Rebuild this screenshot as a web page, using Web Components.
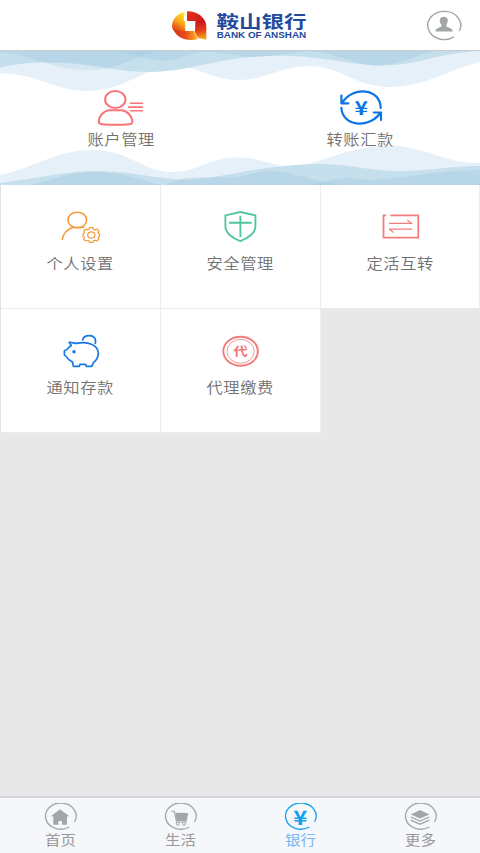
<!DOCTYPE html>
<html lang="zh-CN">
<head>
<meta charset="UTF-8">
<meta name="viewport" content="width=device-width, initial-scale=1">
<title>鞍山银行</title>
<style>
  html, body {
    margin: 0;
    height: 100%;
  }
  body {
    font-family: "Noto Sans CJK SC", "Noto Sans", sans-serif;
    background: #e8e8e8;
    overflow: hidden;
  }
</style>
</head>
<body>
<bank-app></bank-app>

<script>
// line icons, drawn on the canvas given by their viewBox
const ICONS = {
  account: `<svg viewBox="0 0 60 40" width="60" height="40" fill="none" stroke="#f87478" stroke-width="2" stroke-linecap="round">
    <ellipse cx="25.3" cy="11.5" rx="10.2" ry="8.6"/>
    <path d="M12 36.2Q8.800 36 8.800 33.500C9 27 15 22.500 19 22.300H31.500C37 22.700 42 28 42.500 33.500Q42.300 36 39.500 36.200C33 36.700 18 36.700 12 36.200Z"/>
    <path d="M40.500 15.300H52.500M38.500 19.100H52.500M40.500 22.800H52.500" stroke-width="1.600"/></svg>`,
  remit: `<svg viewBox="0 0 60 40" width="60" height="40" fill="none" stroke="#0c74e8" stroke-width="2.200" stroke-linecap="round" stroke-linejoin="round">
    <path d="M12.500 14.500C23 -2 50.500 0 50.700 20M11.400 7.500V15.300H18.300M11.400 19.800C12 37.500 38 42 50.300 25M43.800 24.500H51V32"/>
    <text x="31.300" y="27.300" font-family="Noto Sans CJK SC" font-size="19" font-weight="700" fill="#0c74e8" stroke="none" text-anchor="middle" textLength="13.500" lengthAdjust="spacingAndGlyphs">¥</text></svg>`,
  settings: `<svg viewBox="0 0 60 36" width="60" height="36" fill="none" stroke="#f59a3c" stroke-width="1.600" stroke-linecap="round">
    <ellipse cx="27.300" cy="11" rx="9.300" ry="7.800"/>
    <path d="M12.300 30.300C13.300 24.500 17 20.500 22.700 18.500H33.500"/>
    <ellipse cx="41.300" cy="26" rx="3.600" ry="3.200" stroke-width="1.200"/>
    <path stroke-width="1.200" stroke-linejoin="round" d="M39.500 18.700H43L43.600 20.400L45 20.900L46.900 20L49 21.900L48.100 23.500L48.600 24.400L49.600 24.700V27.400L48.500 27.900L48 28.900L48.800 30.300L46.700 32L45 31.300L43.500 31.900L43 33.300H39.600L39 31.900L37.500 31.300L35.700 32L33.600 30.200L34.400 28.700L34 27.800L33 27.400V24.700L34.100 24.300L34.500 23.300L33.700 21.800L35.700 20.100L37.500 20.900L39 20.300Z"/></svg>`,
  shield: `<svg viewBox="0 0 60 36" width="60" height="36" fill="none" stroke="#52c69c" stroke-width="1.900">
    <path d="M30.300 3L45.400 6.400V17.500C45.400 24 37.500 29.500 30.300 32.200C23 29.500 15.400 24 15.400 17.500V6.400Z"/>
    <path d="M30.400 6.800V28M19 13.800H41.700"/></svg>`,
  exchange: `<svg viewBox="0 0 60 36" width="60" height="36" fill="none" stroke="#f87c7c" stroke-width="1.800" stroke-linejoin="round">
    <path d="M16 6.400H13.500V28.700H48.300V6.400H20.300"/>
    <path stroke-width="1.200" d="M19 14.400H41.800L37.300 11M42.300 20.200H19.500L23.500 23.500"/></svg>`,
  pig: `<svg viewBox="0 0 60 36" width="60" height="36" fill="none" stroke="#1478e4" stroke-width="1.700" stroke-linejoin="round">
    <path d="M19.200 9.300C22 9 24 10.500 26.200 10.400C32 9.200 37.500 9.300 41.500 11.200C46 13 48.300 16.500 48.300 20.500C48.200 25 45.300 28.200 43.500 29.700L41.800 33.300H36.300L35.600 31.300H30L29.300 33.300H23.400L22.500 29L18.500 26.400C17.300 24.500 16 22.700 14.400 22V17.800C16.500 17.500 18 15.800 19.200 14.100L21.300 12.500Z"/>
    <path d="M32.500 7.500C34 1 44.500 1.200 45.500 7.500Q45.600 9 45.200 11"/>
    <circle cx="24" cy="18.700" r="1.700" fill="#1478e4" stroke="none"/></svg>`,
  agent: `<svg viewBox="0 0 60 36" width="60" height="36" fill="none" stroke="#f27c7c">
    <ellipse cx="30.600" cy="18.300" rx="17.300" ry="14.500" stroke-width="1.900"/>
    <ellipse cx="30.600" cy="18.300" rx="13.600" ry="11.900" stroke-width=".8"/>
    <text x="30.600" y="23" font-family="Noto Sans CJK SC" font-size="12.500" font-weight="700" fill="#f27474" stroke="none" text-anchor="middle" textLength="14.500" lengthAdjust="spacingAndGlyphs">代</text></svg>`
};

const RING = `<path d="M35.600 18.800A15.300 13.100 0 1 0 30.300 24" fill="none" stroke="currentColor" stroke-width="1.300"/>`;

const TAB_ICONS = {
  home: `<path d="M21 6.200L30.300 13.300H28V21.800H23V18H19.500V21.800H14.300V13.300H11.800Z"/>`,
  cart: `<path d="M16.200 9.700L29.200 9.900L27.700 18H17.600Z"/>
    <path d="M12.300 8.300H15.300L17.500 19H28" fill="none" stroke="currentColor" stroke-width="1.100"/>
    <g fill="none" stroke="currentColor"><circle cx="18.800" cy="20.800" r="1.500"/><circle cx="25" cy="20.800" r="1.500"/></g>`,
  yen: `<text x="21.200" y="21.500" font-family="Noto Sans CJK SC" font-size="20" font-weight="700" text-anchor="middle" textLength="14" lengthAdjust="spacingAndGlyphs">¥</text>`,
  layers: `<path d="M21 7L30.500 11.400L21 15.500L11.800 11.400Z"/>
    <path d="M11.800 14L21 18L30.300 14M11.800 17.200L21 21.200L30.300 17.200" fill="none" stroke="currentColor" stroke-width="1.300"/>`
};

class AppHeader extends HTMLElement {
  connectedCallback() {
    this.attachShadow({ mode: "open" });
    this.shadowRoot.innerHTML = `
      <style>
        :host {
          display: grid;
          grid-template-columns: 1fr 160px 1fr;
          align-items: center;
          box-sizing: border-box;
          height: 51px;
          background: #fff;
          border-bottom: 1px solid #c9cccd;
        }
        svg { display: block; }
        .logo { grid-column: 2; }
        .user { justify-self: end; margin-right: 16px; }
      </style>
      <svg class="logo" viewBox="0 0 160 50" width="160" height="50">
        <defs>
          <linearGradient id="a" x1=".7" y1="0" x2=".3" y2="1"><stop offset="0" stop-color="#ffe426"/><stop offset=".5" stop-color="#fbaa18"/><stop offset="1" stop-color="#e03a16"/></linearGradient>
          <linearGradient id="b" x1="0" y1="0" x2="1" y2="1"><stop offset="0" stop-color="#e2341c"/><stop offset="1" stop-color="#c4121b"/></linearGradient>
          <linearGradient id="c" x1=".5" y1="0" x2=".6" y2="1"><stop offset="0" stop-color="#c9151b"/><stop offset=".5" stop-color="#e2401a"/><stop offset="1" stop-color="#fbb01e"/></linearGradient>
          <linearGradient id="d" x1="0" y1="0" x2="1" y2="0"><stop offset="0" stop-color="#d8301a"/><stop offset=".5" stop-color="#e8501a"/><stop offset="1" stop-color="#fbc020"/></linearGradient>
        </defs>
        <g transform="translate(0 1) scale(.3333)">
          <path d="M74 33C50 38 36 56 36 76Q37 86 42 90H76V62Q71 60 71 54Z" fill="url(#a)"/>
          <path d="M81 31C109 30 135 47 139 73L107 76V60H81Z" fill="url(#b)"/>
          <path d="M107 60H133Q139 69 139 79V116L116 111Q105 105 105 88Z" fill="url(#c)"/>
          <path d="M42 90H103Q105 107 115 114C86 122 55 114 42 90Z" fill="url(#d)"/>
          <path d="M77 60H105V90H87Q77 89 77 80Z" fill="#fff"/>
        </g>
        <text x="56.500" y="27.800" font-family="Liberation Sans, Noto Sans CJK SC" font-size="17" font-weight="700" fill="#234a9c" textLength="90" lengthAdjust="spacingAndGlyphs">鞍山银行</text>
        <text x="56.700" y="38.200" font-family="Liberation Sans" font-size="8.600" font-weight="700" fill="#234a9c" textLength="89.500" lengthAdjust="spacingAndGlyphs">BANK OF ANSHAN</text>
      </svg>
      <svg class="user" viewBox="0 0 40 32" width="40" height="32" fill="#a2a6a8">
        <g transform="translate(-.6 .6)">
          <path d="M36 21.500A16.500 14.100 0 1 0 30.500 27.300" fill="none" stroke="#a2a6a8" stroke-width="1.400"/>
          <path d="M20.300 7.200C24.500 7.200 25 10.500 23.900 13.300C23.300 15 22.700 15.500 22.900 16.600C24 18 29 18 29.500 21.800H12C12.200 18 17 18 18.200 16.600C18.300 15.500 17.500 15 16.900 13.300C15.900 10.500 16.300 7.200 20.300 7.200Z"/>
        </g>
      </svg>
    `;
  }
}
customElements.define("app-header", AppHeader);

class MenuItem extends HTMLElement {
  connectedCallback() {
    this.attachShadow({ mode: "open" });
    this.shadowRoot.innerHTML = `
      <style>
        :host {
          display: flex;
          flex-direction: column;
          align-items: center;
          color: #707070;
          font-size: 14.5px;
          line-height: 20px;
        }
        svg {
          display: block;
          margin-right: 1px;
        }
        .label {
          margin-top: var(--label-gap, 8px);
          letter-spacing: .6px;
          transform: scaleX(1.12);
          font-weight: 350;
          white-space: nowrap;
        }
      </style>
      ${ICONS[this.getAttribute("icon")]}
      <span class="label"><slot></slot></span>
    `;
  }
}
customElements.define("menu-item", MenuItem);

class WaveBanner extends HTMLElement {
  connectedCallback() {
    this.attachShadow({ mode: "open" });
    this.shadowRoot.innerHTML = `
      <style>
        :host {
          display: grid;
          height: 134px;
          background: #fff;
        }
        .waves, .items { grid-area: 1 / 1; }
        .waves { display: block; }
        .items {
          display: grid;
          grid-template-columns: 1fr 1fr;
          padding-top: 37px;
          padding-left: 1px;
          --label-gap: 1px;
        }
      </style>
      <svg class="waves" viewBox="0 0 480 134" width="480" height="134">
        <!-- top -->
        <path fill="#e6f0f8" d="M0 0V22.300C35 22 55 40 87 40C125 40 140 17 175 16C200 15 210 29 240 29C265 29 280 15 310 15C340 15 355 36 390 36C425 36 450 18 480 11V0Z"/>
        <path fill="#c6dfed" d="M0 0V17C20 11 45 11 65 12C95 14 120 21 150 21C190 20 215 9 250 6C310 1 345 14 378 14.500C420 15 440 1 480 0Z"/>
        <path fill="#a3cae0" fill-opacity=".42" d="M0 0V1C20 3 32 9 45 11.500C75 11 95 15 108 17C125 13 138 5 157 0Z"/>
        <path fill="#c6dfed" fill-opacity=".6" d="M45 11.500C60 17 72 19 88 19C97 19 103 18 108 17C90 13 65 11 45 11.500Z"/>
        <path fill="#a3cae0" fill-opacity=".42" d="M118 0C140 5 150 10 166 9.500C185 8 192 1 210 1C225 1 235 5 250 6C275 5 290 3 306 0Z"/>
        <path fill="#a3cae0" fill-opacity=".42" d="M306 0C335 1 350 13 374 14.500C400 15 410 5 437 0Z"/>
        <!-- bottom -->
        <path fill="#e6f0f8" d="M0 134V124C35 117 55 99 92 99C130 99 143 121 171 121C200 121 208 106 240 106.500C262 107 275 116 293 116C325 111 360 91 399 95C430 99 450 113 480 112V134Z"/>
        <path fill="#c6dfed" d="M0 134V132C35 128 63 120 100 120C135 121 165 129 190 129C220 127 265 113 323 113C355 114 370 120 400 120C430 120 450 115 480 115V134Z"/>
        <path fill="#a3cae0" fill-opacity=".42" d="M32 134C55 128 70 121 94 121C122 121 140 128 160 134Z"/>
        <path fill="#a3cae0" fill-opacity=".42" d="M180 128C207 124 228 129 247 124C262 119 280 119 296 124C310 128 325 131 340 134H165Z"/>
        <path fill="#a3cae0" fill-opacity=".42" d="M312 134C332 127 350 125 367 129C400 128 430 120 480 119V134Z"/>
      </svg>
      <div class="items">
        <menu-item icon="account">账户管理</menu-item>
        <menu-item icon="remit">转账汇款</menu-item>
      </div>
    `;
  }
}

class ServiceGrid extends HTMLElement {
  connectedCallback() {
    this.attachShadow({ mode: "open" });
    this.shadowRoot.innerHTML = `
      <style>
        :host {
          display: grid;
          grid-template-columns: repeat(3, 160px);
          grid-auto-rows: 124px;
        }
        ::slotted(menu-item) {
          box-sizing: border-box;
          padding-top: 24px;
          background: #fff;
          border-left: 1px solid #ececec;
          border-bottom: 1px solid #ececec;
        }
        ::slotted(menu-item:nth-child(3n + 1)) {
          border-left-color: #e2e2e2;
        }
        ::slotted(menu-item:nth-child(3n)) {
          border-right: 1px solid #ececec;
        }
        ::slotted(menu-item:last-child) {
          box-shadow: 1px 0 #efefef;
        }
      </style>
      <slot></slot>
    `;
  }
}
customElements.define("wave-banner", WaveBanner);
customElements.define("service-grid", ServiceGrid);

class TabItem extends HTMLElement {
  connectedCallback() {
    this.attachShadow({ mode: "open" });
    this.shadowRoot.innerHTML = `
      <style>
        :host {
          flex: 1;
          display: flex;
          flex-direction: column;
          align-items: center;
          padding-top: 5px;
          color: #a3a6a8;
          font-size: 13.5px;
          line-height: 20px;
        }
        :host([active]) { color: #10a2ec; }
        :host([active]) .label { color: #78b8ee; }
        svg {
          display: block;
          margin-right: 2px;
        }
        .label {
          margin-top: -4px;
          color: #999;
          transform: scaleX(1.14);
        }
      </style>
      <svg viewBox="0 0 40 30" width="40" height="30" fill="currentColor">${RING}${TAB_ICONS[this.getAttribute("icon")]}</svg>
      <span class="label"><slot></slot></span>
    `;
  }
}
customElements.define("tab-item", TabItem);

class TabBar extends HTMLElement {
  connectedCallback() {
    this.attachShadow({ mode: "open" });
    this.shadowRoot.innerHTML = `
      <style>
        :host {
          display: flex;
          box-sizing: border-box;
          height: 57px;
          background: #f5f7fa;
          border-top: 2px solid #d3d7d9;
        }
      </style>
      <slot></slot>
    `;
  }
}
customElements.define("tab-bar", TabBar);

class BankApp extends HTMLElement {
  connectedCallback() {
    this.attachShadow({ mode: "open" });
    this.shadowRoot.innerHTML = `
      <style>
        :host {
          display: flex;
          flex-direction: column;
          width: 480px;
          height: 853px;
        }
        main { flex: 1; }
      </style>
      <app-header></app-header>
      <main>
        <wave-banner></wave-banner>
        <service-grid>
          <menu-item icon="settings">个人设置</menu-item>
          <menu-item icon="shield">安全管理</menu-item>
          <menu-item icon="exchange">定活互转</menu-item>
          <menu-item icon="pig">通知存款</menu-item>
          <menu-item icon="agent">代理缴费</menu-item>
        </service-grid>
      </main>
      <tab-bar>
        <tab-item icon="home">首页</tab-item>
        <tab-item icon="cart">生活</tab-item>
        <tab-item icon="yen" active>银行</tab-item>
        <tab-item icon="layers">更多</tab-item>
      </tab-bar>
    `;
  }
}
customElements.define("bank-app", BankApp);
</script>
</body>
</html>
